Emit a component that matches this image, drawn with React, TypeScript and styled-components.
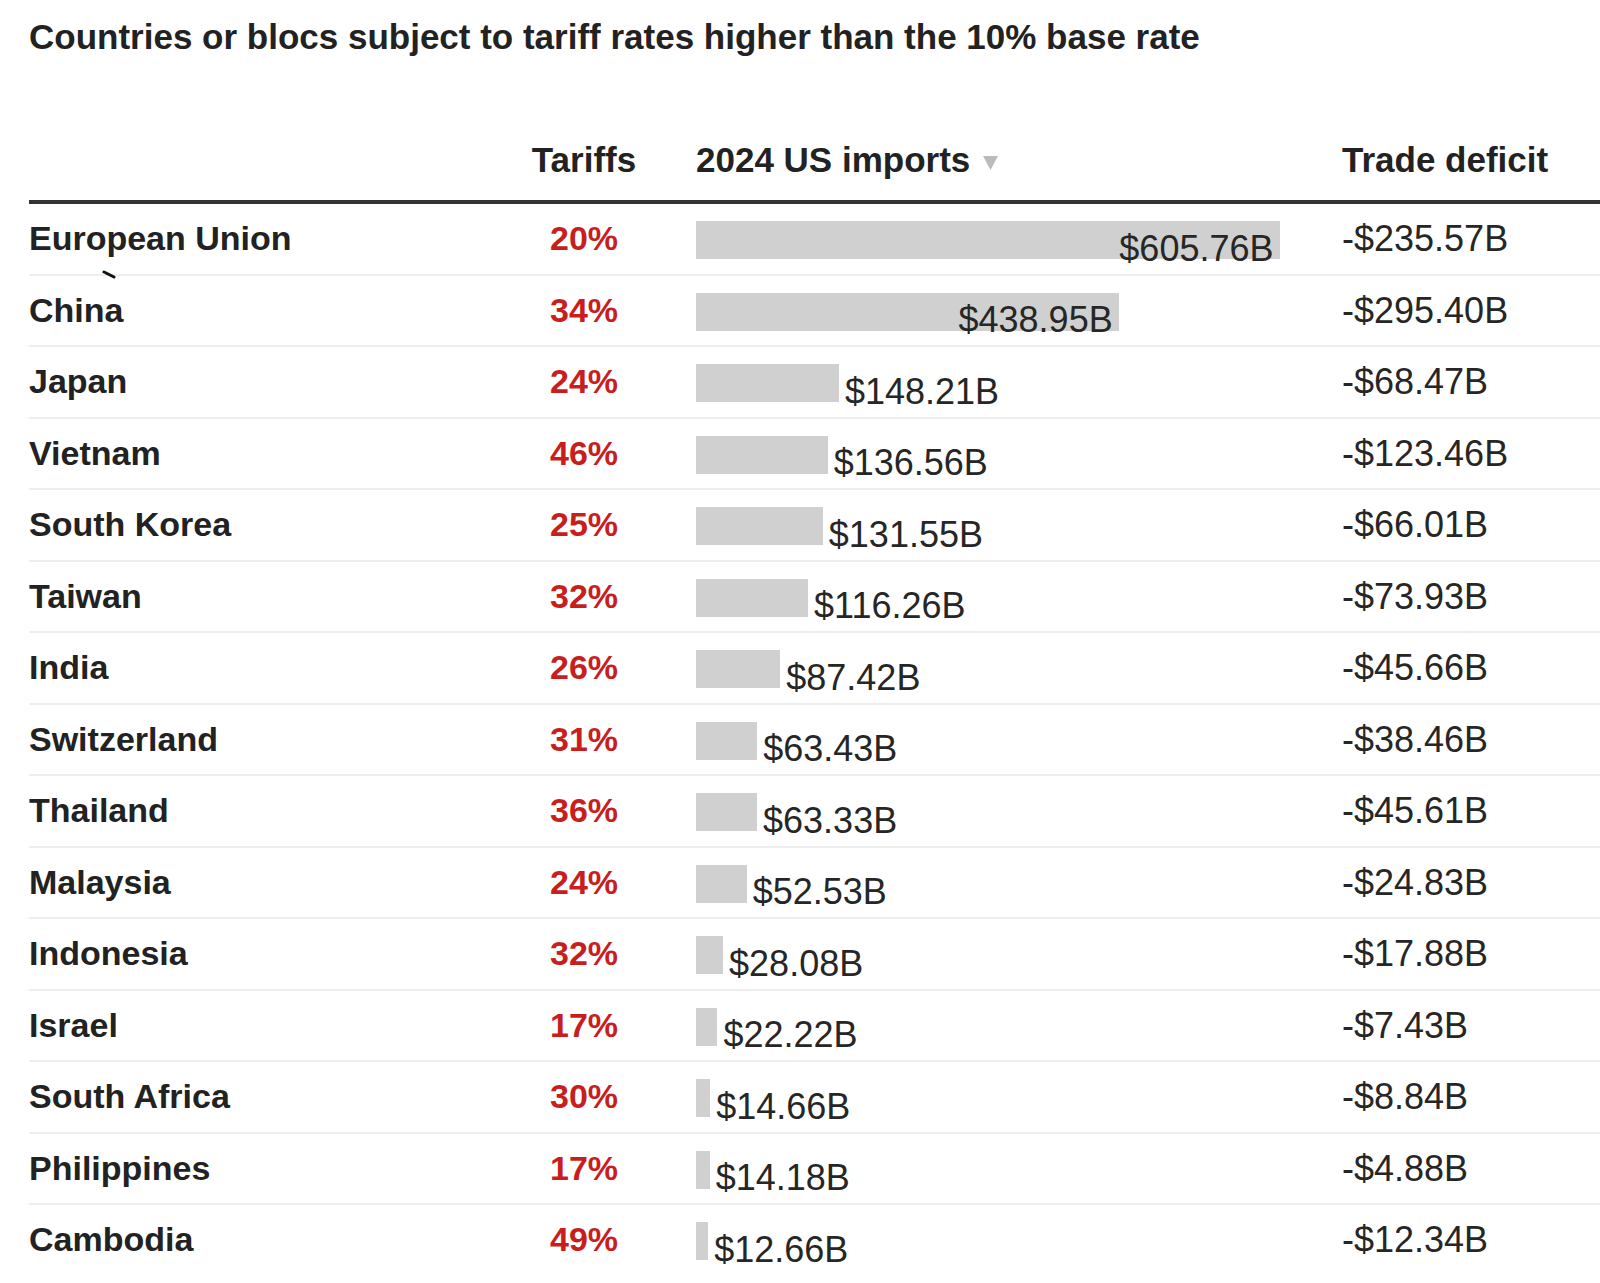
import styled, { createGlobalStyle } from 'styled-components';

// 2024 figures, billions of dollars
interface Bloc {
  name: string;
  tariff: number;
  imports: number;
  deficit: number;
}

const blocs: Bloc[] = [
  { name: 'European Union', tariff: 20, imports: 605.76, deficit: 235.57 },
  { name: 'China', tariff: 34, imports: 438.95, deficit: 295.4 },
  { name: 'Japan', tariff: 24, imports: 148.21, deficit: 68.47 },
  { name: 'Vietnam', tariff: 46, imports: 136.56, deficit: 123.46 },
  { name: 'South Korea', tariff: 25, imports: 131.55, deficit: 66.01 },
  { name: 'Taiwan', tariff: 32, imports: 116.26, deficit: 73.93 },
  { name: 'India', tariff: 26, imports: 87.42, deficit: 45.66 },
  { name: 'Switzerland', tariff: 31, imports: 63.43, deficit: 38.46 },
  { name: 'Thailand', tariff: 36, imports: 63.33, deficit: 45.61 },
  { name: 'Malaysia', tariff: 24, imports: 52.53, deficit: 24.83 },
  { name: 'Indonesia', tariff: 32, imports: 28.08, deficit: 17.88 },
  { name: 'Israel', tariff: 17, imports: 22.22, deficit: 7.43 },
  { name: 'South Africa', tariff: 30, imports: 14.66, deficit: 8.84 },
  { name: 'Philippines', tariff: 17, imports: 14.18, deficit: 4.88 },
  { name: 'Cambodia', tariff: 49, imports: 12.66, deficit: 12.34 },
];

const MAX_BAR = 584;
const maxImports = Math.max(...blocs.map((b) => b.imports));

const GlobalStyle = createGlobalStyle`
  body {
    margin: 0;
    background: #fff;
    color: #262626;
    font-family: "Liberation Sans", Arial, Helvetica, sans-serif;
  }
`;

const Page = styled.div`
  padding: 16px 0 0 29px;
`;

const Title = styled.h1`
  margin: 0;
  font-size: 35px;
  line-height: 42px;
  font-weight: 700;
  color: #222;
`;

const Grid = styled.div`
  display: grid;
  grid-template-columns: 491px 128px 694px 1fr;
`;

const HeaderRow = styled(Grid)`
  margin-top: 80.5px;
  padding-bottom: 19.5px;
  border-bottom: 4px solid #333;
  font-size: 35px;
  line-height: 42px;
  font-weight: 700;
  color: #222;
`;

const HeadCell = styled.div<{ $center?: boolean; $indent?: boolean }>`
  display: flex;
  align-items: center;
  justify-content: ${(p) => (p.$center ? 'center' : 'flex-start')};
  padding-left: ${(p) => (p.$indent ? '48px' : '0')};
  white-space: nowrap;
`;

const SortArrow = styled.svg`
  margin-left: 13px;
  margin-top: 6px;
  flex: none;
`;

const Row = styled(Grid)`
  position: relative;
  height: 69.5px;
  border-bottom: 2px solid #eeeeee;

  &:last-child {
    border-bottom: none;
  }
`;

const Country = styled.div`
  font-size: 34px;
  line-height: 69.5px;
  font-weight: 700;
  color: #222;
  white-space: nowrap;
`;

const Tariff = styled.div`
  font-size: 34px;
  line-height: 69.5px;
  font-weight: 700;
  color: #c81e1e;
  text-align: center;
`;

const ImportsCell = styled.div`
  display: flex;
  align-items: flex-start;
  padding-left: 48px;
`;

const Bar = styled.div<{ $inside?: boolean }>`
  flex: none;
  display: flex;
  justify-content: flex-end;
  align-items: flex-start;
  margin-top: 17px;
  height: 38px;
  padding-right: ${(p) => (p.$inside ? '6.5px' : '0')};
  box-sizing: border-box;
  background: #d0d0d0;
`;

const Amount = styled.span<{ $inside?: boolean }>`
  font-size: 36px;
  line-height: 36px;
  white-space: nowrap;
  margin-top: ${(p) => (p.$inside ? '9.5px' : '26.5px')};
  margin-left: ${(p) => (p.$inside ? '0' : '6px')};
`;

const Deficit = styled.div`
  font-size: 36px;
  line-height: 69.5px;
  white-space: nowrap;
`;

// stray pointer mark under the first row
const Tick = styled.svg`
  position: absolute;
  left: 73px;
  top: 66px;
`;

const money = (n: number) => `$${n.toFixed(2)}B`;

export default function App() {
  return (
    <>
      <GlobalStyle />
      <Page>
        <Title>Countries or blocs subject to tariff rates higher than the 10% base rate</Title>
        <HeaderRow>
          <HeadCell />
          <HeadCell $center>Tariffs</HeadCell>
          <HeadCell $indent>
            2024 US imports
            <SortArrow width="15" height="14" viewBox="0 0 15 14">
              <path d="M0 0 H15 L7.5 14 Z" fill="#bbbbbb" />
            </SortArrow>
          </HeadCell>
          <HeadCell>Trade deficit</HeadCell>
        </HeaderRow>
        {blocs.map((b, i) => {
          const width = (b.imports / maxImports) * MAX_BAR;
          const inside = width > 300;
          return (
            <Row key={b.name}>
              <Country>{b.name}</Country>
              <Tariff>{b.tariff}%</Tariff>
              <ImportsCell>
                <Bar $inside={inside} style={{ width }}>
                  {inside && <Amount $inside>{money(b.imports)}</Amount>}
                </Bar>
                {!inside && <Amount>{money(b.imports)}</Amount>}
              </ImportsCell>
              <Deficit>-{money(b.deficit)}</Deficit>
              {i === 0 && (
                <Tick width="14" height="10" viewBox="0 0 14 10">
                  <path d="M2 2 L12 7" stroke="#111" strokeWidth="3" strokeLinecap="round" />
                </Tick>
              )}
            </Row>
          );
        })}
      </Page>
    </>
  );
}
